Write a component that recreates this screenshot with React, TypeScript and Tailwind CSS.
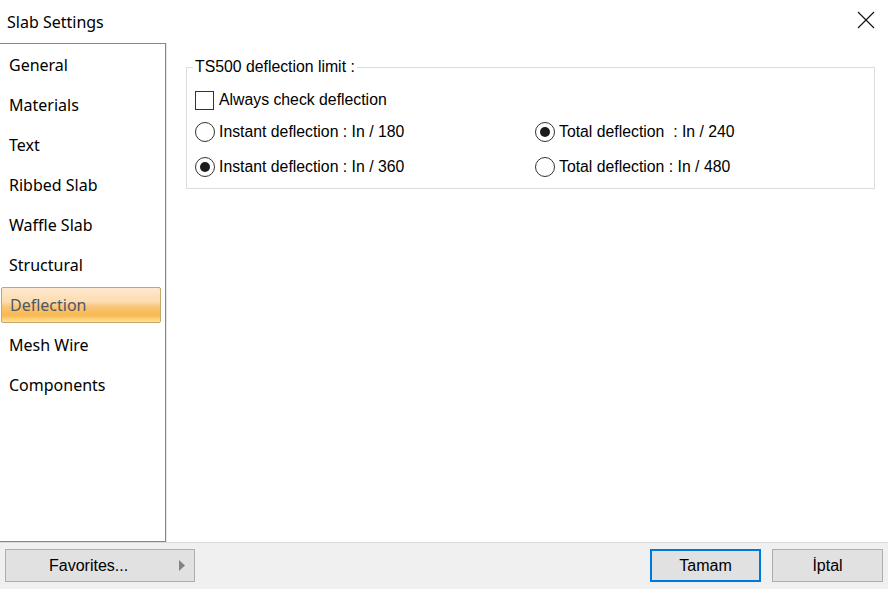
const pages = [
  'General',
  'Materials',
  'Text',
  'Ribbed Slab',
  'Waffle Slab',
  'Structural',
  'Deflection',
  'Mesh Wire',
  'Components',
];

const ui = { fontFamily: '"Noto Sans", "Open Sans", sans-serif' };
const arial = { fontFamily: '"Liberation Sans", Arial, sans-serif' };

function Radio({ checked }: { checked?: boolean }) {
  return (
    <span className="flex h-[20px] w-[20px] shrink-0 items-center justify-center rounded-full border border-[#333333] bg-white">
      {checked && <span className="h-[10px] w-[10px] rounded-full bg-[#1b1b1b]" />}
    </span>
  );
}

function Option({ label, checked }: { label: string; checked?: boolean }) {
  return (
    <div className="flex h-[24px] items-center gap-[4px]">
      <Radio checked={checked} />
      <span className="whitespace-pre">{label}</span>
    </div>
  );
}

export default function App() {
  const selected = 'Deflection';

  return (
    <div className="flex h-[589px] w-[888px] flex-col overflow-hidden bg-white text-black">
      {/* title bar */}
      <div className="flex h-[43px] shrink-0 items-center justify-between pl-[7px] pr-[12px]">
        <span className="text-[16px] leading-none" style={ui}>
          Slab Settings
        </span>
        <svg width="18" height="18" viewBox="0 0 18 18" className="mr-[1px] mt-[-4px]">
          <path d="M1 1L17 17M17 1L1 17" stroke="#111" strokeWidth="1.1" />
        </svg>
      </div>

      <div className="flex min-h-0 flex-1">
        {/* page list */}
        <div className="w-[166px] shrink-0 border-y border-r border-[#828790] bg-white" style={ui}>
          {pages.map((p) => (
            <div key={p} className="h-[40px] pb-[1px] pl-[1px] pr-[4px] pt-[3px]">
              {p === selected ? (
                <div className="flex h-full items-center rounded-[2px] border border-[#c6a46c] bg-[linear-gradient(to_bottom,#fde9cf_0%,#fddcb0_40%,#fac57a_55%,#f8b850_80%,#fde29a_100%)] pl-[8px] text-[16px] text-[#4b5866]">
                  {p}
                </div>
              ) : (
                <div className="flex h-full items-center pl-[8px] text-[16px]">{p}</div>
              )}
            </div>
          ))}
        </div>
        <div className="w-px shrink-0 bg-[#e6e6e6]" />

        {/* settings */}
        <div className="flex-1 pl-[19px] pr-[13px] pt-[15px]" style={arial}>
          <fieldset className="h-[131px] border border-[#dcdcdc] px-[8px] text-[15.8px]">
            <legend className="ml-[-2px] px-[2px] leading-[18px]">TS500 deflection limit :</legend>
            <div className="mt-[12px] flex h-[24px] items-center gap-[5px]">
              <span className="h-[19px] w-[19px] border border-[#333333] bg-white" />
              <span>Always check deflection</span>
            </div>
            <div className="mt-[8px] grid grid-cols-[340px_1fr] gap-y-[11px]">
              <Option label="Instant deflection : In / 180" />
              <Option label="Total deflection  : In / 240" checked />
              <Option label="Instant deflection : In / 360" checked />
              <Option label="Total deflection : In / 480" />
            </div>
          </fieldset>
        </div>
      </div>

      {/* bottom bar */}
      <div className="flex h-[47px] shrink-0 items-start border-t border-[#dadada] bg-[#f0f0f0] pt-[6px] text-[16px]" style={arial}>
        <button className="ml-[5px] flex h-[33px] w-[190px] items-center border border-[#adadad] bg-[#e1e1e1] pl-[43px] pr-[8px]">
          <span className="flex-1 text-left">Favorites...</span>
          <svg width="8" height="11" viewBox="0 0 8 11">
            <path d="M1 0L7 5.5L1 11Z" fill="#838383" />
          </svg>
        </button>
        <div className="flex-1" />
        <button className="h-[33px] w-[111px] border-2 border-[#0078d7] bg-[#e1e1e1]">Tamam</button>
        <button className="ml-[11px] mr-[5px] h-[33px] w-[111px] border border-[#adadad] bg-[#e1e1e1]">İptal</button>
      </div>
    </div>
  );
}
